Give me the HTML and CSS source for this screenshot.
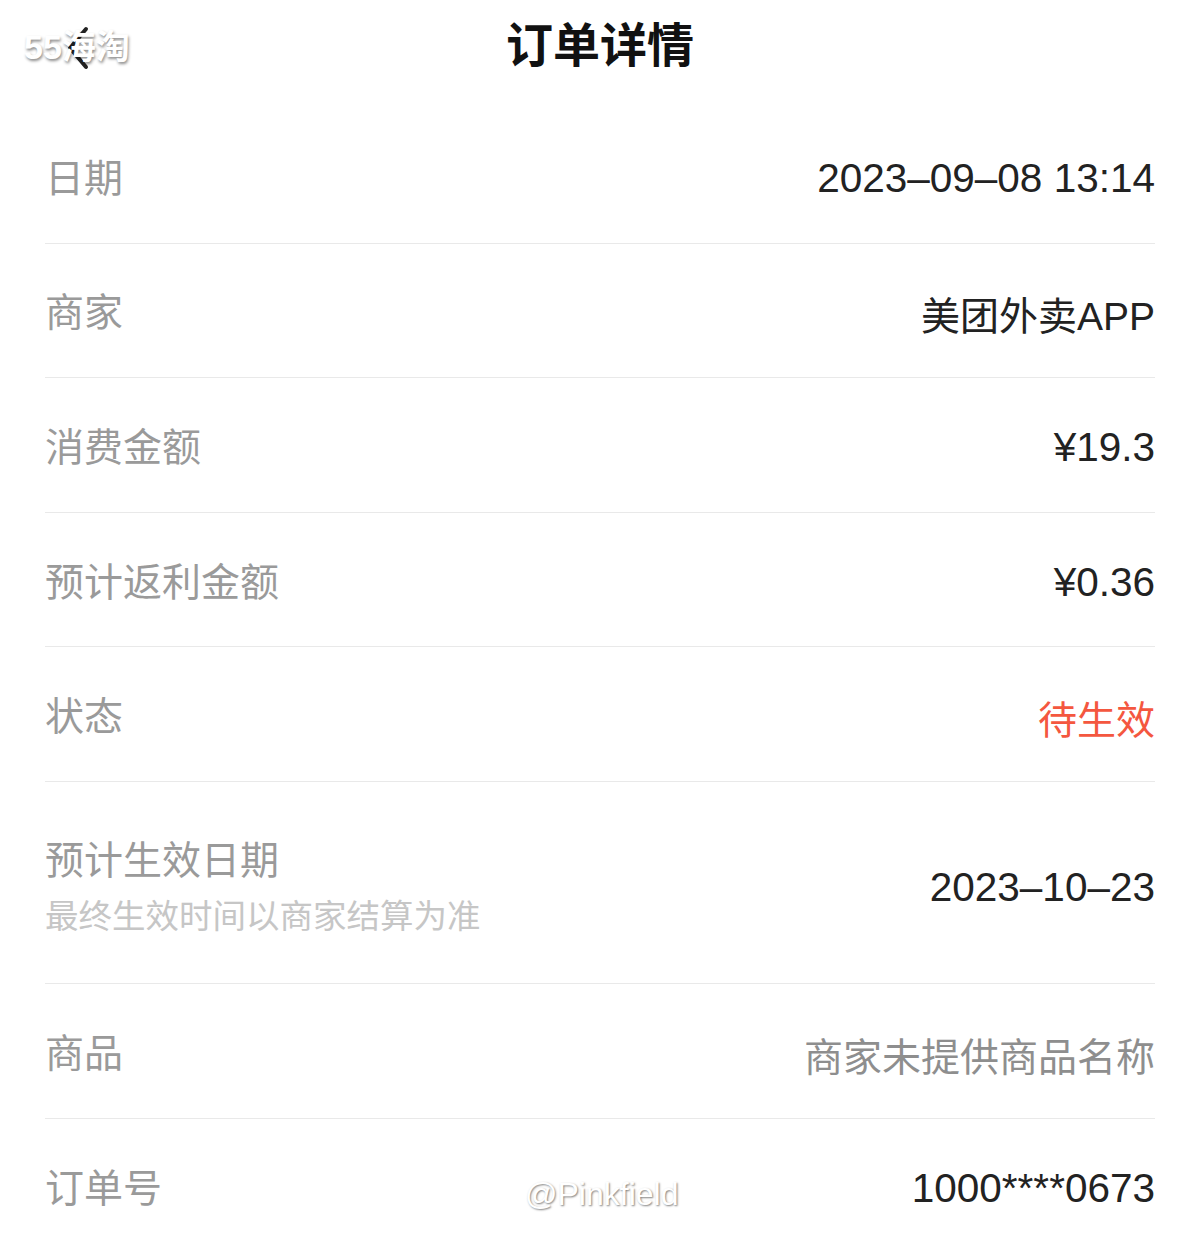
FILE: index.html
```html
<!DOCTYPE html>
<html>
<head>
  <title>订单详情</title>
  <link rel="stylesheet" href="styles.css">
</head>
<body>
  <div class="header">
    <a class="back" href="#">
      <svg width="24" height="46" viewBox="0 0 24 46">
        <path d="M20 4 L4 23 L20 42" fill="none" stroke="#222" stroke-width="4" stroke-linecap="round" stroke-linejoin="round"/>
      </svg>
    </a>
    <h1>订单详情</h1>
  </div>

  <div class="list">
    <div class="row">
      <div class="label">日期</div>
      <div class="value">2023–09–08 13:14</div>
    </div>
    <div class="row">
      <div class="label">商家</div>
      <div class="value cn">美团外卖APP</div>
    </div>
    <div class="row">
      <div class="label">消费金额</div>
      <div class="value">¥19.3</div>
    </div>
    <div class="row">
      <div class="label">预计返利金额</div>
      <div class="value">¥0.36</div>
    </div>
    <div class="row">
      <div class="label">状态</div>
      <div class="value cn red">待生效</div>
    </div>
    <div class="row tall">
      <div>
        <div class="label">预计生效日期</div>
        <div class="sub">最终生效时间以商家结算为准</div>
      </div>
      <div class="value">2023–10–23</div>
    </div>
    <div class="row">
      <div class="label">商品</div>
      <div class="value cn grey">商家未提供商品名称</div>
    </div>
    <div class="row last">
      <div class="label">订单号</div>
      <div class="value">1000****0673</div>
    </div>
  </div>

  <div class="mark mark-top">55海淘</div>
  <div class="mark mark-bottom">@Pinkfield</div>
</body>
</html>
```

FILE: styles.css
```css
body {
  font-family: "Liberation Sans", "Noto Sans CJK SC", sans-serif;
  margin: 0;
  background: #fff;
  color: #222;
}

.header {
  position: relative;
  height: 109px;
  display: flex;
  justify-content: center;
}

.header h1 {
  margin: 0;
  padding-top: 17px;
  font-size: 47px;
  line-height: 58px;
  font-weight: bold;
  color: #111;
}

.back {
  position: absolute;
  left: 66px;
  top: 25px;
}

.list {
  padding: 0 45px;
}

.row {
  display: flex;
  justify-content: space-between;
  align-items: center;
  box-sizing: border-box;
  height: 134.6px;
  padding-top: 6px;
  border-bottom: 1px solid #e9e9e9;
}

.row.tall {
  height: 202px;
  padding-top: 10px;
}

.row.last {
  border-bottom: none;
}

.label {
  font-size: 39px;
  color: #9a9a9a;
  line-height: 48px;
}

.sub {
  font-size: 33.5px;
  color: #c6c6c6;
  line-height: 40px;
  margin-top: 12px;
}

.value {
  font-size: 40.5px;
  color: #222;
}

.value.cn {
  font-size: 39px;
}

.value.red {
  color: #f4573f;
}

.value.grey {
  color: #8e8e8e;
}

.mark {
  position: absolute;
  color: #fff;
  font-weight: bold;
  text-shadow: 1px 2px 3px rgba(0, 0, 0, 0.45);
}

.mark-top {
  left: 24px;
  top: 20px;
  font-size: 34px;
}

.mark-bottom {
  left: 525px;
  top: 1176px;
  font-size: 32px;
  font-weight: normal;
  text-shadow: 1px 1px 2px rgba(0, 0, 0, 0.5);
}
```
